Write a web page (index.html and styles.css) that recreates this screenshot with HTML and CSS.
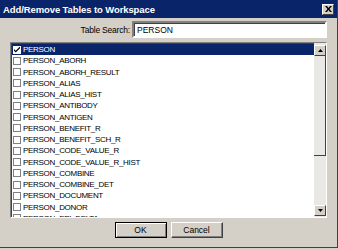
FILE: index.html
```html
<!DOCTYPE html>
<html lang="en">
<head>
    <meta charset="UTF-8">
    <title>Add/Remove Tables to Workspace</title>
    <link rel="stylesheet" href="styles.css">
</head>
<body>
    <div class="dialog">
        <div class="title-bar">
            <span class="title-text">Add/Remove Tables to Workspace</span>
            <span class="close-btn">
                <svg width="7" height="6" viewBox="0 0 7 6"><path d="M0 0h2l1.5 2L5 0h2L4.5 3 7 6H5L3.5 4 2 6H0l2.5-3z" fill="#000"/></svg>
            </span>
        </div>

        <div class="search-row">
            <label class="search-label">Table Search:</label>
            <div class="search-input">PERSON</div>
        </div>

        <div class="list-box">
            <div class="list-items">
                <div class="item selected"><span class="check checked"><svg width="7" height="7" viewBox="0 0 7 7"><path d="M0 3l2 2 5-5v2L2 7 0 5z" fill="#000"/></svg></span>PERSON</div>
                <div class="item"><span class="check"></span>PERSON_ABORH</div>
                <div class="item"><span class="check"></span>PERSON_ABORH_RESULT</div>
                <div class="item"><span class="check"></span>PERSON_ALIAS</div>
                <div class="item"><span class="check"></span>PERSON_ALIAS_HIST</div>
                <div class="item"><span class="check"></span>PERSON_ANTIBODY</div>
                <div class="item"><span class="check"></span>PERSON_ANTIGEN</div>
                <div class="item"><span class="check"></span>PERSON_BENEFIT_R</div>
                <div class="item"><span class="check"></span>PERSON_BENEFIT_SCH_R</div>
                <div class="item"><span class="check"></span>PERSON_CODE_VALUE_R</div>
                <div class="item"><span class="check"></span>PERSON_CODE_VALUE_R_HIST</div>
                <div class="item"><span class="check"></span>PERSON_COMBINE</div>
                <div class="item"><span class="check"></span>PERSON_COMBINE_DET</div>
                <div class="item"><span class="check"></span>PERSON_DOCUMENT</div>
                <div class="item"><span class="check"></span>PERSON_DONOR</div>
                <div class="item"><span class="check"></span>PERSON_EPI_DELTA</div>
            </div>
            <div class="scrollbar">
                <span class="scroll-btn">
                    <svg width="5" height="3" viewBox="0 0 5 3"><path d="M2.5 0L5 3H0z" fill="#000"/></svg>
                </span>
                <div class="scroll-track">
                    <div class="scroll-thumb"></div>
                </div>
                <span class="scroll-btn">
                    <svg width="5" height="3" viewBox="0 0 5 3"><path d="M0 0h5L2.5 3z" fill="#000"/></svg>
                </span>
            </div>
        </div>

        <div class="button-row">
            <button class="btn default">OK</button>
            <button class="btn">Cancel</button>
        </div>
    </div>
</body>
</html>
```

FILE: styles.css
```css
body {
    margin: 0;
    background-color: #d4d0c8;
    font-family: "Liberation Sans", Arial, sans-serif;
    font-size: 8px;
    color: #000;
}

.dialog {
    width: 338px;
    height: 248px;
    box-sizing: border-box;
    border-right: 1px solid #404040;
    border-bottom: 1px solid #404040;
    background-color: #d4d0c8;
    display: flex;
    flex-direction: column;
}

.title-bar {
    height: 18px;
    background-color: #0a246a;
    display: flex;
    align-items: center;
    justify-content: space-between;
    padding: 0 3px 0 3px;
}

.title-text {
    color: #fff;
    font-weight: bold;
    font-size: 9.5px;
    letter-spacing: -0.1px;
}

.close-btn {
    width: 12px;
    height: 11px;
    box-sizing: border-box;
    background-color: #d4d0c8;
    border: 1px solid;
    border-color: #fff #404040 #404040 #fff;
    display: flex;
    align-items: center;
    justify-content: center;
}

.search-row {
    display: flex;
    align-items: center;
    justify-content: flex-end;
    gap: 2px;
    margin-top: 3px;
    padding-right: 10px;
}

.search-label {
    font-size: 8.5px;
    letter-spacing: -0.2px;
}

.search-input {
    width: 195px;
    height: 17px;
    box-sizing: border-box;
    background-color: #fff;
    border: 2px solid;
    border-color: #808080 #fff #fff #808080;
    box-shadow: inset 1px 1px 0 #404040;
    font-size: 8.5px;
    padding: 2px 0 0 3px;
}

.list-box {
    margin: 4px 10px 0 10px;
    height: 176px;
    box-sizing: border-box;
    background-color: #fff;
    border: 1px solid;
    border-color: #808080 #fff #fff #808080;
    box-shadow: inset 1px 1px 0 #404040;
    display: flex;
    overflow: hidden;
}

.list-items {
    flex: 1;
    padding-top: 1px;
    padding-left: 1px;
    overflow: hidden;
}

.item {
    height: 11.25px;
    display: flex;
    align-items: center;
    letter-spacing: -0.3px;
    white-space: nowrap;
}

.item.selected {
    background-color: #0a246a;
    color: #fff;
}

.check {
    width: 8px;
    height: 8px;
    box-sizing: border-box;
    border: 1px solid #808080;
    background-color: #fff;
    margin: 0 2px 0 1px;
    display: flex;
    align-items: center;
    justify-content: center;
}

.check.checked {
    border-color: #fff;
}

.scrollbar {
    width: 12px;
    display: flex;
    flex-direction: column;
    background-color: #eae8e4;
}

.scroll-btn {
    height: 11px;
    box-sizing: border-box;
    background-color: #d4d0c8;
    border: 1px solid;
    border-color: #fff #404040 #404040 #fff;
    display: flex;
    align-items: center;
    justify-content: center;
    margin-top: 2px;
}

.scroll-btn:last-child {
    margin-top: 0;
    margin-bottom: 1px;
}

.scroll-track {
    flex: 1;
}

.scroll-thumb {
    height: 100px;
    box-sizing: border-box;
    background-color: #eae8e4;
    border-right: 1px solid #404040;
    border-bottom: 1px solid #404040;
}

.button-row {
    display: flex;
    justify-content: center;
    gap: 4px;
    margin-top: 4px;
}

.btn {
    width: 52px;
    height: 16px;
    box-sizing: border-box;
    background-color: #d4d0c8;
    border: 1px solid;
    border-color: #fff #404040 #404040 #fff;
    box-shadow: inset -1px -1px 0 #808080;
    font-family: "Liberation Sans", Arial, sans-serif;
    font-size: 8.5px;
    padding: 0;
    color: #000;
}

.btn.default {
    border: 1px solid #000;
    box-shadow: inset 1px 1px 0 #fff, inset -1px -1px 0 #808080;
}
```
